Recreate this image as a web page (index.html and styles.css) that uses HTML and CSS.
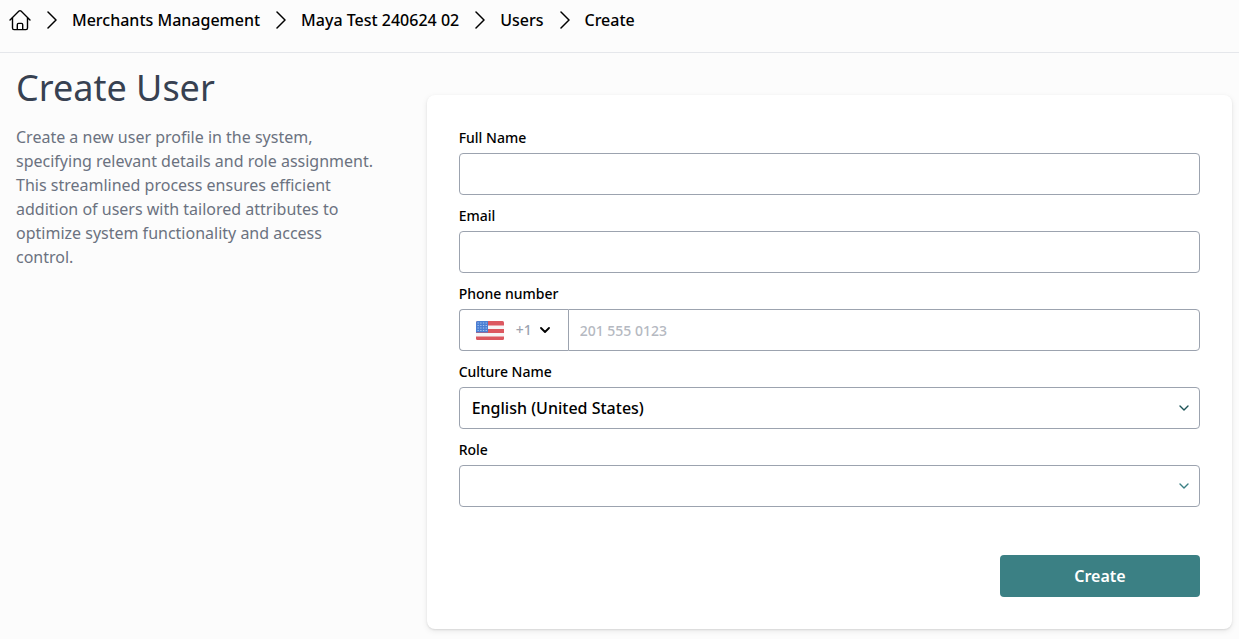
FILE: index.html
```
<!DOCTYPE html>
<html lang="en">
<head>
<meta charset="utf-8">
<meta name="viewport" content="width=device-width, initial-scale=1">
<title>Create User</title>
<link rel="stylesheet" href="styles.css">
</head>
<body>
<header class="topbar">
  <nav aria-label="Breadcrumb">
    <ol class="crumbs">
      <li class="crumb"><a href="#" aria-label="Home"><svg class="home" viewBox="0 0 22 22"><path d="M1 11 10 2.1Q11 1.2 12 2.1L21 11M3.5 8.8V19Q3.5 20.6 5 20.6H17Q18.5 20.6 18.5 19V8.8M8.3 20.6V15.7Q8.3 14.4 9.5 14.4H12.5Q13.7 14.4 13.7 15.7V20.6"/></svg></a></li>
      <li class="crumb"><svg class="sep" viewBox="0 0 10 18"><path d="m1 1 8 8-8 8"/></svg><a href="#">Merchants Management</a></li>
      <li class="crumb"><svg class="sep" viewBox="0 0 10 18"><path d="m1 1 8 8-8 8"/></svg><a href="#">Maya Test 240624 02</a></li>
      <li class="crumb"><svg class="sep" viewBox="0 0 10 18"><path d="m1 1 8 8-8 8"/></svg><a href="#">Users</a></li>
      <li class="crumb"><svg class="sep" viewBox="0 0 10 18"><path d="m1 1 8 8-8 8"/></svg><a href="#" aria-current="page">Create</a></li>
    </ol>
  </nav>
</header>
<main class="page">
  <section class="intro">
    <h1 class="title">Create User</h1>
    <p class="summary">Create a new user profile in the system, specifying relevant details and role assignment. This streamlined process ensures efficient addition of users with tailored attributes to optimize system functionality and access control.</p>
  </section>
  <form class="card">
    <div class="field">
      <label class="label" for="name">Full Name</label>
      <input class="control" id="name" type="text">
    </div>
    <div class="field">
      <label class="label" for="email">Email</label>
      <input class="control" id="email" type="email">
    </div>
    <div class="field">
      <label class="label" for="phone">Phone number</label>
      <div class="phone">
        <button class="country" type="button" aria-label="Country code +1">
          <svg class="flag" viewBox="0 0 28 20">
            <defs><clipPath id="flag-shape"><rect y="1" width="28" height="19" rx="1.5"/></clipPath></defs>
            <g clip-path="url(#flag-shape)">
              <rect width="28" height="20" fill="#f7f5f6"/>
              <path d="M0 1H28V5.5H0zM0 9H28V13H0zM0 16.5H28V20H0z" fill="#dc5860"/>
              <rect y="1" width="12" height="11.5" fill="#4a7fd4"/>
              <path d="M1.5 3H11M1.5 5.5H11M1.5 8H11M1.5 10.5H11" stroke="#a9c5f0" stroke-width="1.2" stroke-linecap="butt" stroke-dasharray="1.3 1.4"/>
            </g>
          </svg>
          <span class="code">+1</span>
          <svg class="caret" viewBox="0 0 10 6"><path d="m1 1 4 4 4-4"/></svg>
        </button>
        <input class="control number" id="phone" type="tel" placeholder="201 555 0123">
      </div>
    </div>
    <div class="field">
      <label class="label" for="culture">Culture Name</label>
      <div class="select">
        <select class="control" id="culture"><option>English (United States)</option></select>
        <svg class="chevron dark" viewBox="0 0 10 6"><path d="m1 1 4 4 4-4"/></svg>
      </div>
    </div>
    <div class="field">
      <label class="label" for="role">Role</label>
      <div class="select">
        <select class="control" id="role"><option></option></select>
        <svg class="chevron" viewBox="0 0 10 6"><path d="m1 1 4 4 4-4"/></svg>
      </div>
    </div>
    <button class="submit" type="submit">Create</button>
  </form>
</main>
</body>
</html>
```
FILE: styles.css
```
* { box-sizing: border-box; }
body {
  margin: 0;
  background: #fcfcfc;
  color: #000;
  font: 400 16px/24px "Noto Sans", "Open Sans", sans-serif;
}
button, input, select { font: inherit; color: inherit; }
svg { display: block; fill: none; stroke: currentColor; stroke-linecap: round; stroke-linejoin: round; flex: none; }
a { color: inherit; text-decoration: none; }
.topbar { padding: 8px 9px 20px; border-bottom: 1px solid #e5e7eb; }
.crumbs { display: flex; align-items: center; margin: 0; padding: 0; list-style: none; font-weight: 500; }
.crumb { display: flex; align-items: center; }
.home { width: 22px; height: 22px; stroke-width: 1.4; }
.sep { width: 10px; height: 18px; margin: 0 15px 0 16px; stroke-width: 1.5; }
.page { display: grid; grid-template-columns: 1fr 2fr; gap: 16px; padding: 11px 7px 10px 8px; }
.intro { padding: 0 32px 0 8px; }
.title { margin: 0; font-size: 36px; line-height: 48px; font-weight: 400; color: #374151; }
.summary { margin: 13px 0 0; color: #6b7280; }
.card {
  display: flex;
  flex-direction: column;
  gap: 11px;
  margin-top: 31px;
  padding: 33px 32px 32px;
  background: #fff;
  border-radius: 8px;
  box-shadow: 0 2px 6px rgba(0, 0, 0, .08), 0 1px 2px rgba(0, 0, 0, .1);
}
.field { display: flex; flex-direction: column; gap: 5px; }
.label { font-size: 14px; line-height: 20px; font-weight: 500; }
.control {
  width: 100%;
  height: 42px;
  padding: 0 12px;
  border: 1px solid #9ca3af;
  border-radius: 4px;
  background: #fff;
  appearance: none;
  font-weight: 500;
}
.phone { display: flex; }
.country {
  display: flex;
  align-items: center;
  flex: none;
  width: 109px;
  padding: 0 16px;
  border: 1px solid #9ca3af;
  border-right: 0;
  border-radius: 4px 0 0 4px;
  background: #fff;
}
.flag { width: 28px; height: 20px; stroke: none; }
.code { margin: 0 8px 0 12px; font-size: 14px; font-weight: 500; color: #9ca3af; }
.caret { width: 10px; height: 6px; stroke-width: 1.8; }
.number { flex: 1; padding: 0 11px; border-radius: 0 4px 4px 0; font-size: 14px; }
.number::placeholder { color: #b5b9c1; opacity: 1; }
.select { display: grid; align-items: center; }
.select > * { grid-area: 1 / 1; }
.chevron { width: 10px; height: 6px; margin-right: 11px; justify-self: end; color: #3b8084; stroke-width: 1.4; pointer-events: none; }
.chevron.dark { color: #1d5457; }
.submit {
  align-self: flex-end;
  width: 200px;
  height: 42px;
  margin-top: 37px;
  border: 0;
  border-radius: 4px;
  background: #3b8084;
  color: #fff;
  font-weight: 600;
}
```
